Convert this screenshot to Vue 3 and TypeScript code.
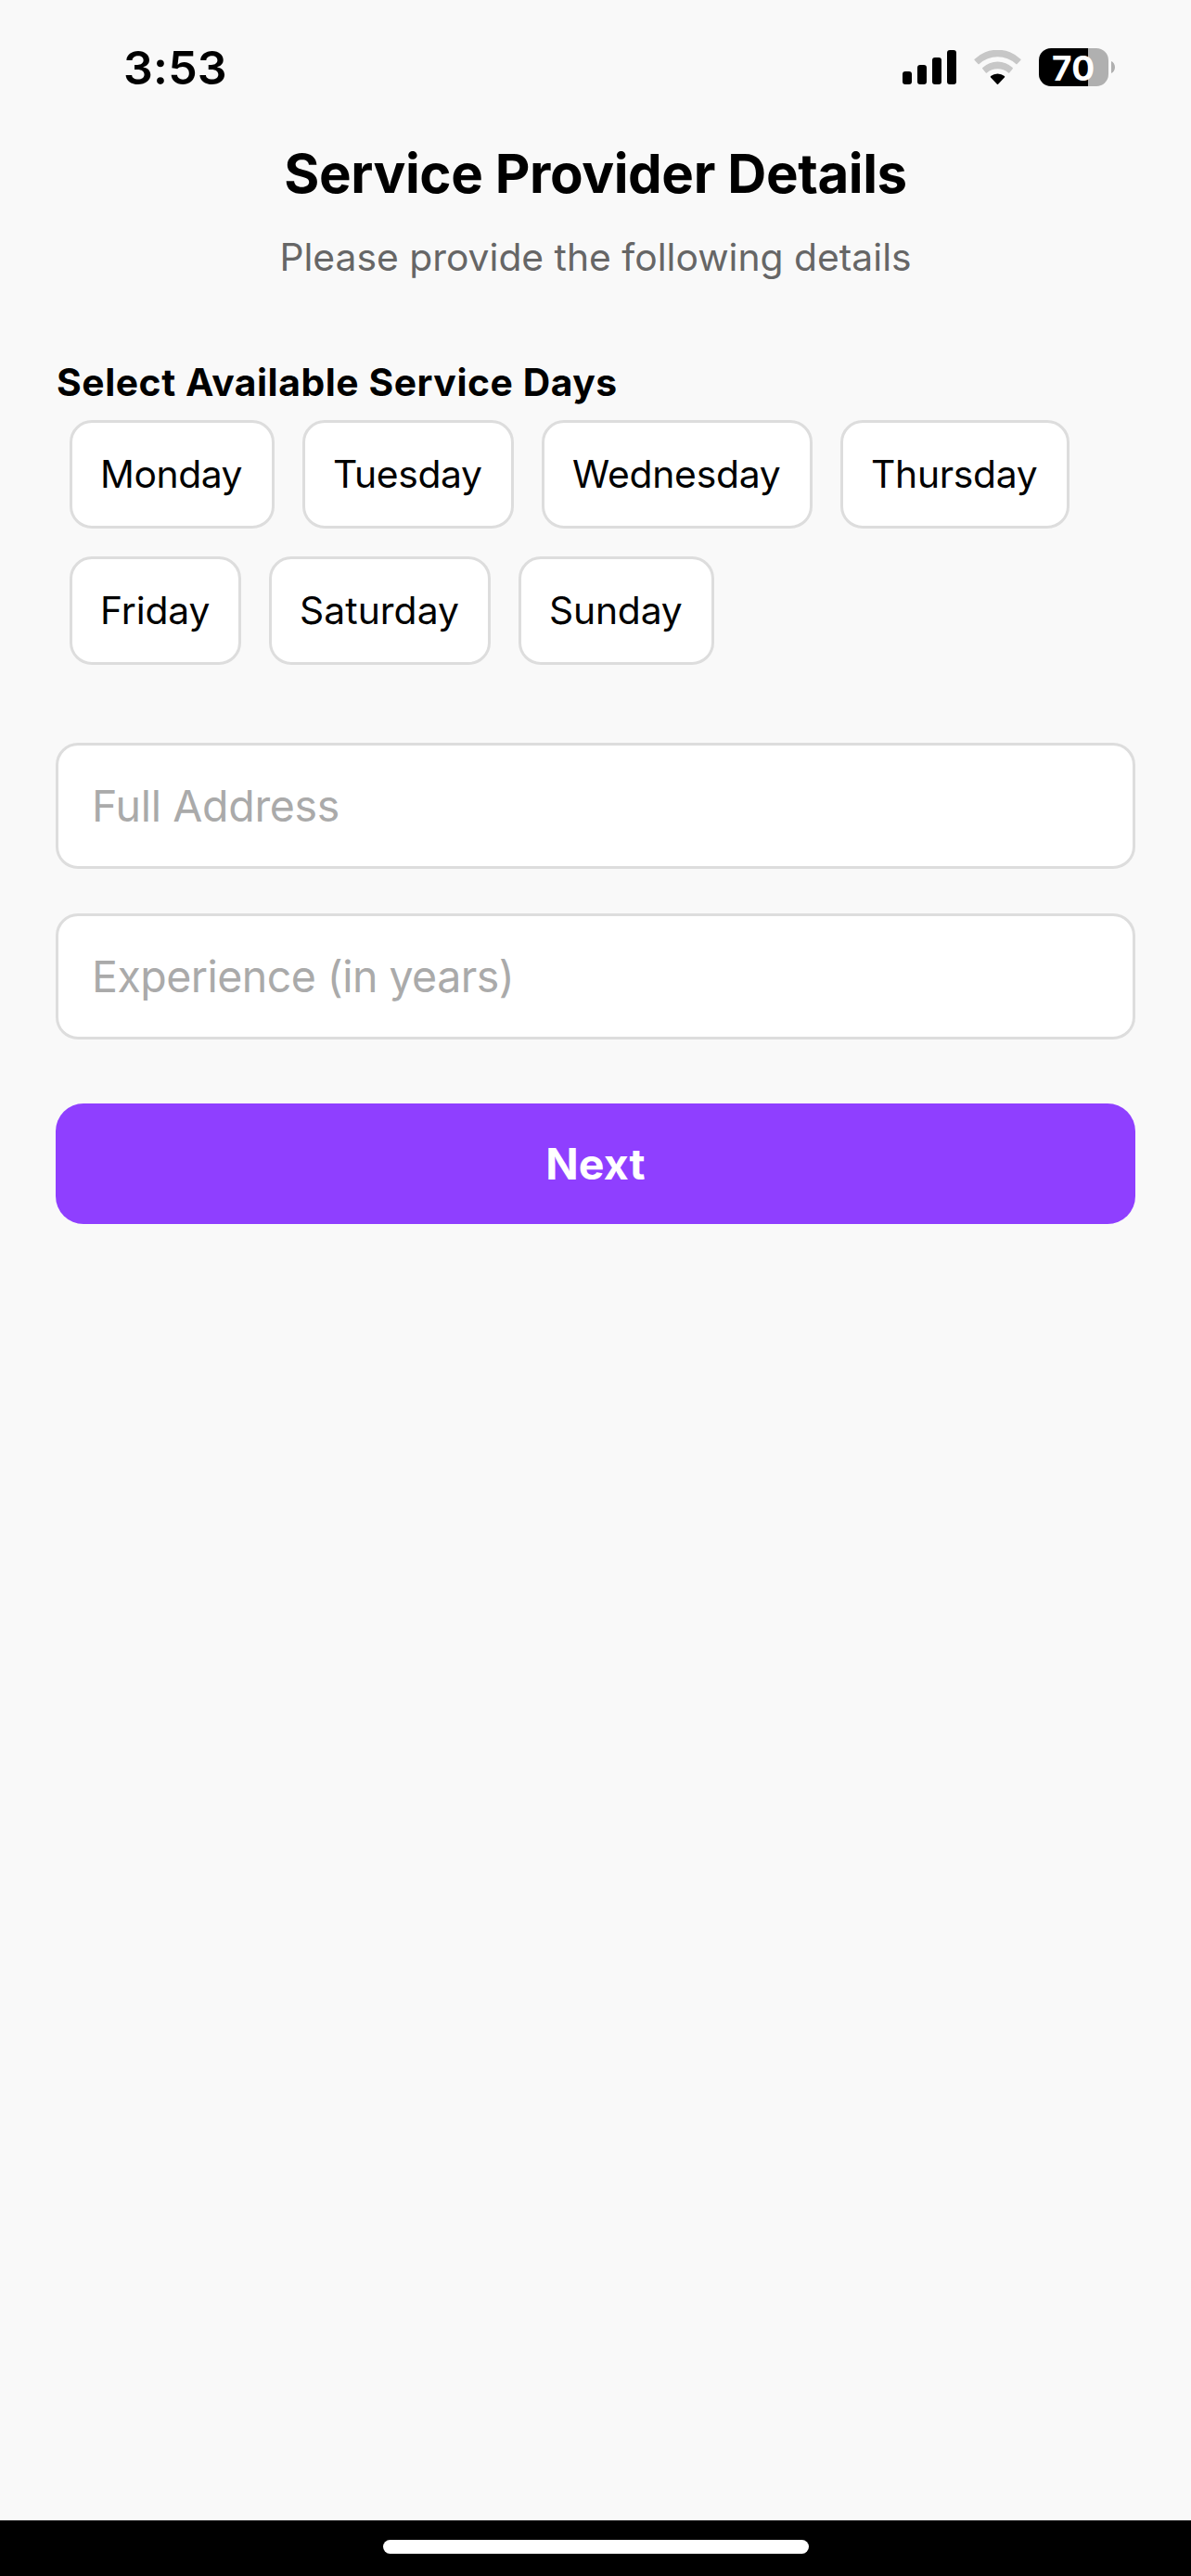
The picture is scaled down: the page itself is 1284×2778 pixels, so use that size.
<script setup lang="ts">
import { ref } from 'vue'

interface Day {
  name: string
  width: number
  tracking: number
}

const days: Day[] = [
  { name: 'Monday', width: 221, tracking: -0.42 },
  { name: 'Tuesday', width: 228, tracking: -0.34 },
  { name: 'Wednesday', width: 292, tracking: -0.23 },
  { name: 'Thursday', width: 247, tracking: -0.28 },
  { name: 'Friday', width: 185, tracking: -0.1 },
  { name: 'Saturday', width: 239, tracking: 0.07 },
  { name: 'Sunday', width: 211, tracking: -0.18 },
]

const address = ref('')
const experience = ref('')
</script>

<template>
  <div class="screen">
    <header class="status-bar">
      <span class="clock">3:53</span>
      <div class="indicators">
        <svg class="signal" width="58" height="37" viewBox="0 0 58 37">
          <rect x="0" y="23" width="10" height="14" rx="3" />
          <rect x="16" y="16" width="10" height="21" rx="3" />
          <rect x="32" y="8" width="10" height="29" rx="3" />
          <rect x="48" y="0" width="10" height="37" rx="3" />
        </svg>
        <svg class="wifi" width="51" height="37" viewBox="0 0 51 37">
          <path class="wifi-off" d="M0.7 9.8A35.5 35.5 0 0 1 50.3 9.8Q50.9 10.4 50.3 11L46.5 15Q45.9 15.5 45.3 15A29.4 29.4 0 0 0 5.7 15Q5.1 15.5 4.5 15L0.7 11Q0.1 10.4 0.7 9.8Z" />
          <path class="wifi-off" d="M9.3 19A23.6 23.6 0 0 1 41.7 19Q42.3 19.6 41.7 20.2L38.2 24.5Q37.6 25 37 24.5A17.8 17.8 0 0 0 14 24.5Q13.4 25 12.8 24.5L9.3 20.2Q8.7 19.6 9.3 19Z" />
          <path d="M18.1 28Q21.3 25.4 25.5 25.4T32.9 28Q33.5 28.7 32.9 29.4L26.1 36.7Q25.5 37.3 24.9 36.7L18.1 29.4Q17.5 28.7 18.1 28Z" />
        </svg>
        <div class="battery">
          <div class="battery-body">70</div>
          <svg width="4" height="13" viewBox="0 0 4 13">
            <path d="M0 0C2.5 1.2 4 3.6 4 6.5S2.5 11.8 0 13Z" fill="#b0b0b0" />
          </svg>
        </div>
      </div>
    </header>

    <main class="content">
      <h1 class="title">Service Provider Details</h1>
      <p class="subtitle">Please provide the following details</p>

      <h2 class="label">Select Available Service Days</h2>
      <div class="days">
        <button
          v-for="day in days"
          :key="day.name"
          type="button"
          class="day"
          :style="{ width: `${day.width}px`, letterSpacing: `${day.tracking}px` }"
        >{{ day.name }}</button>
      </div>

      <input v-model="address" class="field address" type="text" placeholder="Full Address" />
      <input v-model="experience" class="field experience" type="text" placeholder="Experience (in years)" />

      <button type="button" class="next">Next</button>
    </main>

    <footer class="home-bar">
      <div class="home-indicator"></div>
    </footer>
  </div>
</template>

<style>
body {
  margin: 0;
  background: #f9f9f9;
}
</style>

<style scoped>
.screen {
  display: flex;
  flex-direction: column;
  box-sizing: border-box;
  width: 1284px;
  height: 2778px;
  background: #f9f9f9;
  color: #000;
  font-family: Inter, "Liberation Sans", sans-serif;
}

.status-bar {
  display: flex;
  align-items: center;
  justify-content: space-between;
  box-sizing: border-box;
  height: 145px;
  padding: 0 82px 0 133px;
}

.clock {
  padding-top: 2px;
  font-size: 50px;
  font-weight: 560;
  line-height: 61px;
  letter-spacing: 0.2px;
}

.indicators {
  display: flex;
  align-items: center;
  gap: 19px;
}

.signal,
.wifi {
  display: block;
}

.wifi-off {
  fill: #c7c7c7;
}

.battery {
  display: flex;
  align-items: center;
  gap: 3px;
}

.battery-body {
  box-sizing: border-box;
  width: 75px;
  height: 41px;
  padding: 1px 0 0 14px;
  border-radius: 13px;
  background: linear-gradient(to right, #000 53px, #b0b0b0 53px);
  color: #fff;
  font-size: 37px;
  font-weight: 650;
  line-height: 41px;
  letter-spacing: 0.2px;
}

.content {
  display: flex;
  flex: 1;
  flex-direction: column;
  padding: 6px 60px 0;
}

.title {
  margin: 0;
  font-size: 58.2px;
  font-weight: 700;
  line-height: 72px;
  letter-spacing: -0.395px;
  text-align: center;
}

.subtitle {
  margin: 29px 0 0;
  color: #666;
  font-size: 40.8px;
  line-height: 50px;
  text-align: center;
}

.label {
  margin: 85px 0 0;
  padding-left: 1px;
  font-size: 40.8px;
  font-weight: 700;
  line-height: 50px;
  letter-spacing: 0.557px;
}

.days {
  display: flex;
  flex-wrap: wrap;
  gap: 30px;
  margin-top: 16px;
  padding: 0 15px;
}

.day {
  box-sizing: border-box;
  height: 117px;
  padding: 0 0 2px 30px;
  border: 3px solid #ddd;
  border-radius: 24px;
  background: #fff;
  color: #000;
  font-family: inherit;
  font-size: 40.8px;
  line-height: 50px;
  text-align: left;
  white-space: nowrap;
}

.field {
  box-sizing: border-box;
  width: 100%;
  height: 136px;
  padding: 0 36px;
  border: 3px solid #ddd;
  border-radius: 24px;
  background: #fff;
  color: #000;
  font-family: inherit;
  font-size: 46.5px;
  outline: none;
}

.field::placeholder {
  color: #aaa;
  opacity: 1;
}

.address {
  margin-top: 84px;
  letter-spacing: -0.327px;
}

.experience {
  margin-top: 48px;
  letter-spacing: -0.54px;
}

.next {
  height: 130px;
  margin-top: 69px;
  padding: 0 0 1px;
  border: 0;
  border-radius: 30px;
  background: #8f3fff;
  color: #fff;
  font-family: inherit;
  font-size: 46.5px;
  font-weight: 700;
  letter-spacing: 0.15px;
}

.home-bar {
  display: flex;
  justify-content: center;
  box-sizing: border-box;
  height: 60px;
  padding-top: 21px;
  background: #000;
}

.home-indicator {
  width: 459px;
  height: 15px;
  border-radius: 8px;
  background: #fff;
}
</style>
